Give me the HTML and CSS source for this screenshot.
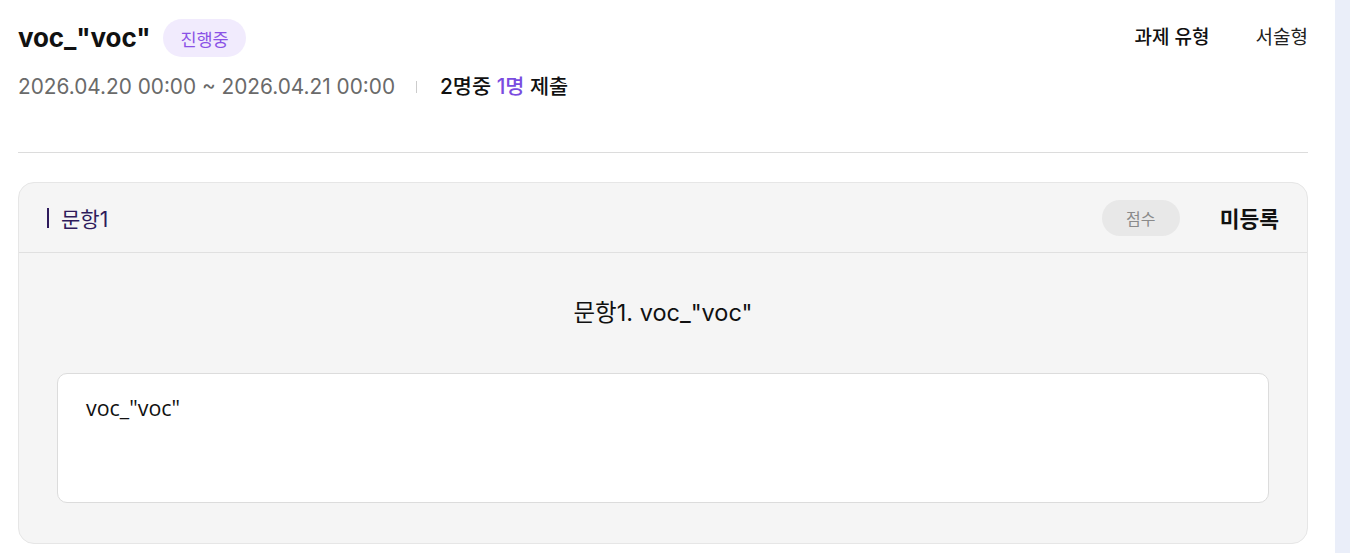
FILE: index.html
```html
<!DOCTYPE html>
<html lang="ko">
<head>
<meta charset="utf-8">
<link rel="stylesheet" href="styles.css">
</head>
<body>
<div class="page">
  <main class="main">
    <header class="head">
      <div class="head-left">
        <div class="title-row">
          <h1 class="title">voc_"voc"</h1>
          <span class="status">진행중</span>
        </div>
        <div class="meta">
          <span class="period">2026.04.20 00:00 ~ 2026.04.21 00:00</span>
          <span class="sep"></span>
          <span class="submit">2명중 <em class="hl">1명</em> 제출</span>
        </div>
      </div>
      <div class="head-right">
        <span class="type-label">과제 유형</span>
        <span class="type-value">서술형</span>
      </div>
    </header>
    <hr class="divider">
    <section class="card">
      <div class="card-head">
        <span class="q-name">문항1</span>
        <div class="card-tools">
          <span class="score">점수</span>
          <span class="reg">미등록</span>
        </div>
      </div>
      <div class="card-body">
        <h2 class="q-title">문항1. voc_"voc"</h2>
        <div class="answer">voc_"voc"</div>
      </div>
    </section>
  </main>
  <aside class="strip"></aside>
</div>
</body>
</html>
```
FILE: styles.css
```css
* { box-sizing: border-box; }
html, body { margin: 0; padding: 0; }
body {
  background: #fff;
  font-family: "Inter", "Noto Sans CJK KR", sans-serif;
  color: #111;
}
.page {
  display: flex;
  height: 553px;
  overflow: hidden;
}
.main {
  width: 1335px;
  padding: 0 27px 0 18px;
}
.strip {
  flex: 1;
  background: #eaeef9;
}
.head {
  display: flex;
  justify-content: space-between;
  align-items: flex-start;
  padding-top: 19px;
}
.title-row {
  display: flex;
  align-items: center;
  gap: 13px;
  height: 38px;
}
.title {
  margin: 0;
  font-size: 26px;
  line-height: 38px;
  font-weight: 700;
  letter-spacing: -0.1px;
  color: #111;
}
.status {
  display: inline-flex;
  align-items: center;
  height: 38px;
  padding: 0 17px;
  border-radius: 19px;
  background: #f1ebfd;
  color: #8a52e6;
  font-size: 17.5px;
}
.meta {
  display: flex;
  align-items: center;
  margin-top: 17px;
  height: 26px;
  font-size: 20.8px;
  line-height: 26px;
}
.period { color: #6a6a6a; }
.sep {
  width: 1px;
  height: 12px;
  background: #ccc;
  margin: 0 23px 0 21px;
}
.submit { color: #111; font-weight: 500; }
.hl { font-style: normal; color: #7a4ce0; }
.head-right {
  display: flex;
  gap: 46px;
  font-size: 19px;
  line-height: 26px;
  padding-top: 6px;
}
.type-label { font-weight: 500; color: #111; }
.type-value { color: #222; }
.divider {
  margin: 52px 0 0;
  border: 0;
  border-top: 1px solid #dcdcdc;
}
.card {
  margin-top: 29px;
  background: #f5f5f5;
  border: 1px solid #e6e6e6;
  border-radius: 16px;
  height: 362px;
}
.card-head {
  display: flex;
  justify-content: space-between;
  align-items: center;
  height: 70px;
  padding: 0 28px;
  border-bottom: 1px solid #e0e0e0;
}
.q-name {
  display: flex;
  align-items: center;
  gap: 12px;
  font-size: 21px;
  color: #2e1b5c;
}
.q-name::before {
  content: "";
  width: 2px;
  height: 20px;
  background: #2e1b5c;
}
.card-tools {
  display: flex;
  align-items: center;
  gap: 40px;
}
.score {
  display: inline-flex;
  align-items: center;
  justify-content: center;
  width: 78px;
  height: 36px;
  border-radius: 18px;
  background: #e8e8e8;
  color: #8a8a8a;
  font-size: 16px;
}
.reg {
  font-size: 21.5px;
  font-weight: 600;
  color: #111;
}
.card-body {
  padding: 44px 38px 0;
}
.q-title {
  margin: 0;
  text-align: center;
  font-size: 23.5px;
  font-weight: 400;
  color: #111;
  line-height: 32px;
}
.answer {
  margin-top: 44px;
  height: 130px;
  background: #fff;
  border: 1px solid #dcdcdc;
  border-radius: 10px;
  padding: 20px 28px;
  font-family: "Open Sans", "Noto Sans CJK KR", sans-serif;
  font-size: 21.4px;
  line-height: 28px;
  color: #111;
}
```
